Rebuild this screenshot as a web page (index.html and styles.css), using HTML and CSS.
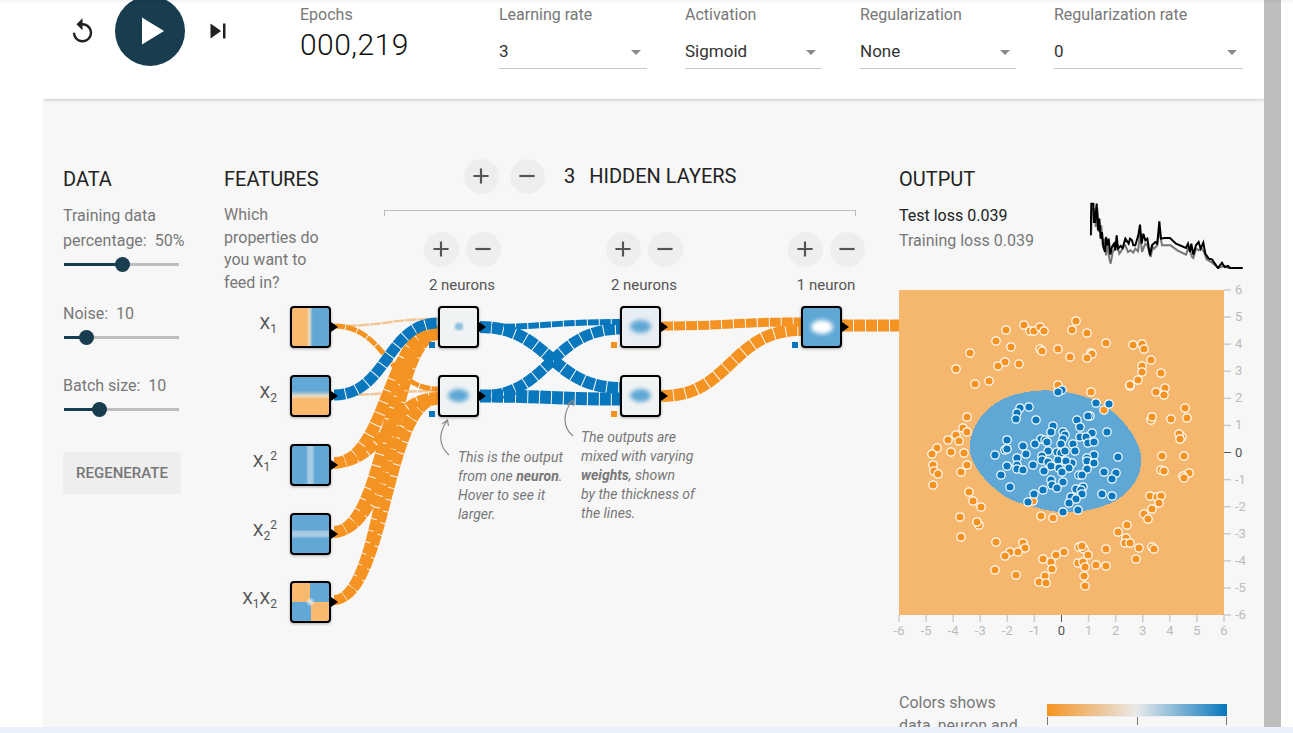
FILE: index.html
```html
<!DOCTYPE html>
<html lang="en">
  <head>
    <meta charset="UTF-8" />
    <meta name="viewport" content="width=device-width, initial-scale=1.0" />
    <title>Neural Network Playground</title>
    <link rel="stylesheet" href="styles.css">
  </head>
  <body>
    <svg class="defs" aria-hidden="true">
      <symbol id="icon-add" viewBox="0 0 24 24"><path d="M19 13h-6v6h-2v-6H5v-2h6V5h2v6h6v2z" /></symbol>
      <symbol id="icon-remove" viewBox="0 0 24 24"><path d="M19 13H5v-2h14v2z" /></symbol>
    </svg>

    <div class="page">
      <div class="main">
        <header class="header">
          <div class="player">
            <svg class="icon-reset" viewBox="0 0 24 24"><path d="M12 5V1L7 6l5 5V7c3.31 0 6 2.69 6 6s-2.69 6-6 6-6-2.69-6-6H4c0 4.42 3.58 8 8 8s8-3.58 8-8-3.58-8-8-8z" /></svg>
            <button class="play" type="button">
              <svg viewBox="0 0 70 70"><path d="M27 21.5 49 35 27 48.5z" /></svg>
            </button>
            <svg class="icon-step" viewBox="0 0 24 24"><path d="M6 18l8.5-6L6 6v12zM16 6v12h2V6h-2z" /></svg>
          </div>
          <div class="epochs">
            <div class="field-label">Epochs</div>
            <div class="epochs-value">000,219</div>
          </div>
          <div class="field field-rate">
            <div class="field-label">Learning rate</div>
            <div class="select">3</div>
          </div>
          <div class="field field-activation">
            <div class="field-label">Activation</div>
            <div class="select">Sigmoid</div>
          </div>
          <div class="field field-reg">
            <div class="field-label">Regularization</div>
            <div class="select">None</div>
          </div>
          <div class="field field-reg-rate">
            <div class="field-label">Regularization rate</div>
            <div class="select">0</div>
          </div>
        </header>

        <div class="workspace">
          <section class="data">
            <h4 class="title">DATA</h4>
            <div class="control control-first">
              <div class="control-label">Training data<br />percentage:&nbsp; 50%</div>
              <div class="slider">
                <div class="slider-fill" style="width: 58px"></div>
                <div class="slider-thumb"></div>
              </div>
            </div>
            <div class="control">
              <div class="control-label">Noise:&nbsp; 10</div>
              <div class="slider">
                <div class="slider-fill" style="width: 22px"></div>
                <div class="slider-thumb"></div>
              </div>
            </div>
            <div class="control">
              <div class="control-label">Batch size:&nbsp; 10</div>
              <div class="slider">
                <div class="slider-fill" style="width: 35px"></div>
                <div class="slider-thumb"></div>
              </div>
            </div>
            <button class="regenerate" type="button">REGENERATE</button>
          </section>

          <section class="network">
            <div class="network-head">
              <div class="features">
                <h4 class="title">FEATURES</h4>
                <p class="features-text">Which properties do you want to feed in?</p>
              </div>
              <div class="hidden-head">
                <div class="layer-count">
                  <button class="round" type="button"><svg><use href="#icon-add" /></svg></button>
                  <button class="round" type="button"><svg><use href="#icon-remove" /></svg></button>
                  <span class="count-num">3</span>
                  <span class="count-text">HIDDEN LAYERS</span>
                </div>
                <div class="bracket"></div>
                <div class="layer-controls">
                  <div class="layer">
                    <div class="layer-buttons">
                      <button class="round" type="button"><svg><use href="#icon-add" /></svg></button>
                      <button class="round" type="button"><svg><use href="#icon-remove" /></svg></button>
                    </div>
                    <div class="layer-label">2 neurons</div>
                  </div>
                  <div class="layer">
                    <div class="layer-buttons">
                      <button class="round" type="button"><svg><use href="#icon-add" /></svg></button>
                      <button class="round" type="button"><svg><use href="#icon-remove" /></svg></button>
                    </div>
                    <div class="layer-label">2 neurons</div>
                  </div>
                  <div class="layer">
                    <div class="layer-buttons">
                      <button class="round" type="button"><svg><use href="#icon-add" /></svg></button>
                      <button class="round" type="button"><svg><use href="#icon-remove" /></svg></button>
                    </div>
                    <div class="layer-label">1 neuron</div>
                  </div>
                </div>
              </div>
            </div>

            <div class="canvas">
              <svg class="links" viewBox="224 300 675 330">
                <path class="link thin" d="M334 326C387 326 387 319 438 319" />
                <path class="link thin" d="M334 395C387 395 387 391 438 391" />
                <path class="link orange w5" d="M334 326C387 326 387 389 438 389" />
                <path class="link orange w12" d="M334 463C387 463 387 331 438 331" />
                <path class="link orange w10" d="M334 463C387 463 387 397 438 397" />
                <path class="link orange w12" d="M334 532C387 532 387 333 438 333" />
                <path class="link orange w10" d="M334 532C387 532 387 399 438 399" />
                <path class="link orange w10" d="M334 600C387 600 387 335 438 335" />
                <path class="link orange w9" d="M334 600C387 600 387 400 438 400" />
                <path class="link blue w11" d="M334 395C387 395 387 323 438 323" />

                <path class="link blue w6" d="M480 327C550 327 550 322 621 322" />
                <path class="link blue w12" d="M480 327C550 327 550 388 621 388" />
                <path class="link blue w11" d="M480 396C550 396 550 329 621 329" />
                <path class="link blue w13" d="M480 396C550 396 550 399 621 399" />

                <path class="link orange w9" d="M662 326C731 326 731 322 801 322" />
                <path class="link orange w12" d="M662 396C731 396 731 330 801 330" />
                <path class="link orange w12" d="M842 325.500H899" />

                <path class="note-arrow" d="M449 455C440 447 437 435 447 421M442 424 447.500 420 448.500 426" />
                <path class="note-arrow" d="M573 436C563 428 562 414 572 401M567 405 573 400 573.500 406" />
              </svg>

              <div class="feat-label r0">X<sub>1</sub></div>
              <div class="feat-label r1">X<sub>2</sub></div>
              <div class="feat-label r2">X<sub>1</sub><sup>2</sup></div>
              <div class="feat-label r3">X<sub>2</sub><sup>2</sup></div>
              <div class="feat-label r4">X<sub>1</sub>X<sub>2</sub></div>

              <div class="node c0 r0 img-x1"></div>
              <div class="node c0 r1 img-x2"></div>
              <div class="node c0 r2 img-x1sq"></div>
              <div class="node c0 r3 img-x2sq"></div>
              <div class="node c0 r4 img-x1x2"></div>

              <div class="node c1 r0"><div class="blob blob-small"></div></div>
              <div class="node c1 r1"><div class="blob"></div></div>
              <div class="node c2 r0 img-pale"><div class="blob"></div></div>
              <div class="node c2 r1"><div class="blob"></div></div>
              <div class="node c3 r0 img-last"><div class="blob blob-white"></div></div>

              <div class="bias bias-blue b1 br0"></div>
              <div class="bias bias-blue b1 br1"></div>
              <div class="bias bias-orange b2 br0"></div>
              <div class="bias bias-orange b2 br1"></div>
              <div class="bias bias-blue b3 br0"></div>

              <div class="note note-one">This is the output from one <b>neuron</b>. Hover to see it larger.</div>
              <div class="note note-two">The outputs are mixed with varying <b>weights</b>, shown<br />by the thickness of the lines.</div>
            </div>
          </section>

          <section class="output">
            <h4 class="title">OUTPUT</h4>
            <div class="loss-row">
              <div class="loss-text">
                <div class="loss-test">Test loss 0.039</div>
                <div class="loss-train">Training loss 0.039</div>
              </div>
              <svg class="loss-chart" viewBox="600 40 460 201">
                <polyline class="loss-line-train" points="603,140 606,60 612,60 617,115 622,60 627,130 634,110 638,170 644,150 648,200 652,165 658,210 662,225 668,190 672,185 682,170 688,195 692,190 700,175 706,170 714,190 722,185 730,192 736,180 744,188 750,135 756,190 760,180 766,165 772,170 782,205 788,175 792,180 800,172 808,125 816,170 842,170 862,185 888,198 894,180 900,185 906,205 910,208 918,180 926,185 934,178 942,190 950,212 966,222 986,238 1000,232 1016,238 1058,238" />
                <polyline class="loss-line-test" points="602,140 604,45 610,45 612,100 615,100 620,45 624,125 628,90 632,150 636,130 640,175 645,190 648,145 652,170 656,150 661,198 666,175 672,165 676,185 680,140 684,180 692,172 698,178 706,150 716,165 720,150 726,155 730,170 736,170 745,140 750,108 755,165 760,135 766,155 772,150 776,175 780,200 786,170 796,160 802,165 808,98 813,150 824,148 840,148 858,165 888,178 894,165 900,190 904,165 910,198 918,170 926,160 932,180 940,162 946,195 956,210 966,212 984,238 996,222 1004,235 1014,232 1020,238 1058,238" />
              </svg>
            </div>
            <svg id="plot" class="plot" viewBox="899 291 360 360"></svg>
            <div class="legend">
              <div class="legend-text">Colors shows data, neuron and weight values.</div>
              <div class="legend-bar">
                <div class="legend-gradient"></div>
                <div class="legend-ticks"></div>
              </div>
            </div>
          </section>
        </div>
      </div>
      <div class="scrollbar"></div>
    </div>
    <div class="top-shade"></div>
    <div class="bottom-strip"></div>
    <script src="plot.js"></script>
  </body>
</html>
```
FILE: styles.css
```css
* {
  box-sizing: border-box;
}
html,
body {
  height: 733px;
  margin: 0;
  overflow: hidden;
  background: #fff;
}
body {
  font-family: Roboto, "Liberation Sans", Arial, sans-serif;
  color: #777;
  font-size: 16px;
}
button {
  font-family: inherit;
  border: none;
  padding: 0;
}
.defs {
  display: none;
}
.page {
  display: flex;
  height: 733px;
  padding-left: 43px;
}
.main {
  width: 1221px;
  height: 733px;
  background: #f7f7f7;
  overflow: hidden;
}
.scrollbar {
  width: 17px;
  height: 733px;
  background: #bebebe;
}
.top-shade {
  position: absolute;
  left: 0;
  top: 0;
  width: 100%;
  height: 4px;
  background: linear-gradient(rgba(0, 0, 0, 0.05), rgba(0, 0, 0, 0));
}
.bottom-strip {
  position: absolute;
  left: 0;
  bottom: 0;
  width: 100%;
  height: 6px;
  background: #e8f0fb;
}

/* header */
.header {
  display: flex;
  height: 99px;
  background: #fff;
  box-shadow: 0 1px 3px rgba(0, 0, 0, 0.2);
  position: relative;
}
.player {
  display: flex;
  align-items: center;
  height: 70px;
  margin-top: -4px;
  padding-left: 25px;
  width: 257px;
}
.icon-reset {
  width: 29px;
  height: 29px;
  fill: #212121;
}
.play {
  width: 70px;
  height: 70px;
  margin-left: 18px;
  border-radius: 50%;
  background: #183d4e;
}
.play svg {
  display: block;
  width: 70px;
  height: 70px;
  fill: #fff;
}
.icon-step {
  width: 30px;
  height: 30px;
  margin-left: 17.5px;
  fill: #212121;
}
.epochs {
  width: 199px;
  padding-top: 5.5px;
}
.field {
  padding-top: 5.5px;
  margin-right: 38px;
}
.field-rate {
  width: 148px;
}
.field-activation {
  width: 137px;
}
.field-reg {
  width: 156px;
}
.field-reg-rate {
  width: 189px;
  margin-right: 0;
}
.field-label {
  line-height: 17px;
  color: #777;
}
.epochs-value {
  margin-top: 4px;
  font-size: 30px;
  font-weight: 300;
  letter-spacing: 0.45px;
  line-height: 35px;
  color: #111;
}
.select {
  position: relative;
  height: 46px;
  padding-top: 18px;
  line-height: 20px;
  font-size: 17px;
  color: #333;
  border-bottom: 1px solid #c8c8c8;
}
.select::after {
  content: "";
  position: absolute;
  right: 6px;
  top: 27px;
  border-left: 5px solid transparent;
  border-right: 5px solid transparent;
  border-top: 5px solid #8a8a8a;
}

/* columns */
.workspace {
  display: flex;
  padding: 69px 0 0 20px;
}
.title {
  margin: 0;
  font-size: 20px;
  font-weight: 400;
  line-height: 23px;
  color: #222;
}
.data {
  width: 161px;
}
.control {
  margin-top: 28.5px;
  width: 118px;
}
.control-first {
  margin-top: 12px;
  width: 130px;
}
.control-label {
  line-height: 25px;
  white-space: nowrap;
}
.slider {
  display: flex;
  align-items: center;
  width: 115px;
  height: 15px;
  margin: 4px 0 0 1px;
  background: linear-gradient(#bdbdbd, #bdbdbd) center / 100% 3px no-repeat;
}
.slider-fill {
  height: 3px;
  background: #183d4e;
}
.slider-thumb {
  width: 15px;
  height: 15px;
  margin-left: -7.5px;
  border-radius: 50%;
  background: #183d4e;
}
.regenerate {
  display: block;
  width: 118px;
  height: 42px;
  margin-top: 35px;
  background: #eee;
  border-radius: 3px;
  color: #777;
  font-size: 15px;
  font-weight: 500;
}

/* network */
.network {
  width: 675px;
}
.network-head {
  display: flex;
}
.features {
  width: 160px;
}
.features-text {
  width: 105px;
  margin: 13px 0 0;
  line-height: 22.5px;
}
.hidden-head {
  width: 472px;
}
.layer-count {
  display: flex;
  align-items: center;
  gap: 11px;
  margin-top: -9.5px;
  padding-left: 79.500px;
  font-size: 20px;
  color: #222;
}
.count-num {
  margin-left: 8.5px;
}
.count-text {
  margin-left: 3px;
}
.round {
  display: block;
  width: 35px;
  height: 35px;
  border-radius: 50%;
  background: #eee;
}
.round svg {
  display: block;
  width: 26px;
  height: 26px;
  margin: 4.5px;
  fill: #555;
}
.bracket {
  height: 6px;
  margin-top: 16.5px;
  border: 1px solid #bdbdbd;
  border-bottom: none;
}
.layer-controls {
  display: grid;
  grid-template-columns: repeat(3, 182px);
  margin: 15.5px 0 0 -13px;
}
.layer-buttons {
  display: flex;
  justify-content: center;
  gap: 7px;
}
.layer-label {
  margin-top: 10px;
  line-height: 17px;
  font-size: 15px;
  text-align: center;
  color: #555;
}

/* diagram */
.canvas {
  position: relative;
  height: 330px;
  margin-top: 5.5px;
}
.links {
  position: absolute;
  left: 0;
  top: 0;
  width: 675px;
  height: 330px;
}
.link {
  fill: none;
  stroke-dasharray: 11 1;
}
.link.orange {
  stroke: #f59322;
}
.link.blue {
  stroke: #0877bd;
}
.link.thin {
  stroke: #f3c795;
  stroke-width: 2.5;
}
.w5 { stroke-width: 5; }
.w6 { stroke-width: 6; }
.w9 { stroke-width: 9; }
.w10 { stroke-width: 10; }
.w11 { stroke-width: 11; }
.w12 { stroke-width: 12; }
.w13 { stroke-width: 13; }
.note-arrow {
  fill: none;
  stroke: #888;
  stroke-width: 1.2;
}
.node {
  position: absolute;
  width: 41px;
  height: 42px;
  border: 2px solid #000;
  border-radius: 4px;
  background: #f0f3f4;
  box-shadow: 0 1px 3px rgba(0, 0, 0, 0.3);
  display: flex;
  align-items: center;
  justify-content: center;
}
.node::after {
  content: "";
  position: absolute;
  left: 39px;
  top: 14px;
  border-left: 7px solid #000;
  border-top: 5px solid transparent;
  border-bottom: 5px solid transparent;
}
.c0 { left: 66px; }
.c1 { left: 214px; }
.c2 { left: 396px; }
.c3 { left: 577px; }
.r0 { top: 6px; }
.r1 { top: 75px; }
.r2 { top: 144px; }
.r3 { top: 213px; }
.r4 { top: 281px; }
.img-x1 {
  background: linear-gradient(90deg, #fab96f 40%, #eadcc8 47%, #61a8d6 56%);
}
.img-x2 {
  background: linear-gradient(#61a8d6 36%, #eadcc8 50%, #fab96f 58%);
}
.img-x1sq {
  background: linear-gradient(90deg, #61a8d6 38%, #a6cbe3 44%, #a6cbe3 55%, #61a8d6 62%);
}
.img-x2sq {
  background: linear-gradient(#61a8d6 38%, #a6cbe3 44%, #a6cbe3 55%, #61a8d6 62%);
}
.img-x1x2 {
  background:
    radial-gradient(circle at 50% 50%, #eee 0, rgba(238, 238, 238, 0) 5px),
    conic-gradient(#61a8d6 25%, #fab96f 25% 50%, #61a8d6 50% 75%, #fab96f 75%);
}
.img-pale {
  background: #e8eef3;
}
.img-last {
  background: #5fa7d5;
}
.blob {
  width: 21px;
  height: 13px;
  border-radius: 50%;
  background: #5fa7d5;
  filter: blur(2px);
}
.blob-small {
  width: 8px;
  height: 7px;
  border-radius: 2px;
  background: #8cc0e0;
  filter: blur(1px);
}
.blob-white {
  width: 22px;
  height: 14px;
  background: #fff;
}
.feat-label {
  position: absolute;
  left: -7px;
  width: 60px;
  height: 42px;
  line-height: 35px;
  font-size: 17px;
  text-align: right;
  color: #555;
  white-space: nowrap;
}
.feat-label sub,
.feat-label sup {
  font-size: 12px;
  line-height: 0;
}
.bias {
  position: absolute;
  width: 6px;
  height: 6px;
}
.bias-blue {
  background: #0877bd;
}
.bias-orange {
  background: #f59322;
}
.b1 { left: 205px; }
.b2 { left: 387px; }
.b3 { left: 568px; }
.br0 { top: 42px; }
.br1 { top: 111px; }
.note {
  position: absolute;
  font-size: 14px;
  font-style: italic;
  line-height: 19px;
  color: #777;
}
.note-one {
  left: 234px;
  top: 148px;
  width: 112px;
}
.note-two {
  left: 357px;
  top: 128px;
  width: 116px;
}

/* output */
.output {
  width: 344px;
}
.loss-row {
  display: flex;
  justify-content: space-between;
  height: 67px;
  margin-top: 11px;
}
.loss-text {
  line-height: 25px;
  padding-top: 1px;
}
.loss-test {
  color: #222;
}
.loss-chart {
  width: 153.300px;
  height: 67px;
}
.loss-chart polyline {
  fill: none;
  stroke-width: 6;
}
.loss-line-train {
  stroke: #777;
}
.loss-line-test {
  stroke: #000;
}
.plot {
  display: block;
  width: 360px;
  height: 360px;
  margin-top: 21px;
  overflow: visible;
}
.plot text {
  font-size: 13px;
  fill: #bbb;
}
.plot text.zero {
  fill: #555;
}
.legend {
  display: flex;
  margin-top: 40.5px;
}
.legend-text {
  width: 148px;
  padding-right: 20px;
  line-height: 23px;
}
.legend-bar {
  width: 180px;
  margin-top: 13.5px;
}
.legend-gradient {
  height: 13px;
  background: linear-gradient(90deg, #f59322, #e8eaeb 50%, #0877bd);
  border-bottom: 1px solid #eee;
}
.legend-ticks {
  height: 8px;
  border-left: 1px solid #777;
  border-right: 1px solid #777;
  background: linear-gradient(#777, #777) center / 1px 100% no-repeat;
}
```
FILE: plot.js
```js
// test/train points in page coordinates, same as the svg viewBox
const orangeDots = [
  [1076,322],[1024,326],[1006,331],[1030,332],[1034,332],[1040,328],[1044,332],[1072,331],[1087,334],[1106,344],
  [1133,346],[1142,345],[1144,350],[996,342],[1011,348],[1040,350],[1042,352],[1058,350],[970,354],[1070,358],
  [1091,354],[1092,355],[1087,359],[1151,361],[1142,367],[1142,373],[1161,374],[1005,363],[998,367],[1019,365],
  [956,370],[989,382],[975,385],[1138,381],[1130,387],[1130,386],[1165,389],[1156,393],[1164,396],[1058,386],
  [1091,393],[1185,409],[1187,419],[1104,411],[967,418],[1151,421],[1152,418],[1171,420],[963,429],[956,436],
  [948,441],[959,442],[967,433],[937,449],[1182,438],[1179,435],[1180,440],[932,455],[951,453],[964,454],
  [1162,457],[1184,457],[933,466],[967,466],[934,472],[938,475],[961,473],[1161,471],[1164,472],[1189,474],
  [1183,477],[1184,479],[933,486],[969,493],[973,502],[981,508],[1150,497],[1157,498],[1161,497],[1159,504],
  [1152,510],[1144,515],[1148,520],[960,518],[979,526],[977,523],[1041,517],[1053,519],[1127,526],[1118,533],
  [961,538],[1126,539],[1125,544],[1130,544],[996,543],[1023,544],[1025,549],[1010,553],[1005,557],[1018,553],
  [1079,548],[1084,550],[1082,547],[1106,550],[1139,549],[1152,548],[1154,550],[1064,553],[1056,556],[1088,556],
  [1043,560],[1051,563],[1078,564],[1083,563],[1136,560],[1096,566],[1106,567],[1085,568],[1052,570],[995,571],
  [1016,576],[1045,577],[1084,577],[1039,583],[1046,584],[1085,587],[1033,502]
];
const blueDots = [
  [1062,391],[1058,393],[1096,404],[1109,405],[1020,409],[1029,408],[1017,414],[1016,420],[1036,421],[1090,417],
  [1088,417],[1077,421],[1053,427],[1080,428],[1051,433],[1063,433],[1092,434],[1107,433],[1065,436],[1063,440],
  [1080,438],[1086,438],[1041,440],[1045,441],[1047,443],[1007,441],[1035,445],[1061,445],[1073,445],[1088,444],
  [1094,443],[1023,447],[1005,451],[1007,450],[1048,452],[1057,453],[1061,454],[1075,452],[1065,452],[1026,455],
  [995,456],[1042,457],[1094,456],[1118,458],[1017,459],[1058,461],[1087,459],[1042,461],[1048,463],[1072,464],
  [1066,462],[1087,462],[1094,464],[1007,467],[1033,466],[1017,466],[1017,470],[1023,471],[1051,467],[1059,469],
  [1069,469],[1087,470],[1044,472],[1062,473],[1104,473],[1116,474],[1001,476],[1079,476],[1082,476],[1112,480],
  [1051,481],[1063,483],[1052,486],[1057,489],[1043,491],[1010,488],[1076,490],[1083,488],[1081,491],[1082,495],
  [1034,495],[1071,498],[1076,500],[1102,495],[1112,497],[1069,504],[1028,503],[1078,511],[1063,513]
];
// outline of the blue decision region
const region = [
  [1027,392],[1055,391],[1077,395],[1095,401],[1110,410],[1122,421],[1132,434],[1139,447],[1142,460],[1139,477],
  [1131,489],[1120,500],[1097,510],[1063,515],[1030,507],[1007,500],[987,483],[975,468],[969,452],[971,436],
  [980,417],[1000,400]
];

const plot = document.getElementById("plot");
const ns = "http://www.w3.org/2000/svg";

function add(name, attrs, text) {
  const el = document.createElementNS(ns, name);
  for (const key in attrs) el.setAttribute(key, attrs[key]);
  if (text !== undefined) el.textContent = text;
  plot.appendChild(el);
  return el;
}

add("rect", { x: 899, y: 291, width: 325, height: 325, fill: "#f5b66e" });

let d = "";
region.forEach((p, i) => {
  const next = region[(i + 1) % region.length];
  const mx = (p[0] + next[0]) / 2;
  const my = (p[1] + next[1]) / 2;
  d += i === 0 ? `M${mx} ${my}` : `Q${p[0]} ${p[1]} ${mx} ${my}`;
});
const first = region[0];
const second = region[1];
d += `Q${first[0]} ${first[1]} ${(first[0] + second[0]) / 2} ${(first[1] + second[1]) / 2}z`;
add("path", { d: d, fill: "#5fa7d5", "shape-rendering": "crispEdges" });

orangeDots.forEach((p) => {
  add("circle", { cx: p[0], cy: p[1], r: 4.2, fill: "#f59322", stroke: "#fff", "stroke-width": 1.2 });
});
blueDots.forEach((p) => {
  add("circle", { cx: p[0], cy: p[1], r: 4.2, fill: "#0877bd", stroke: "#fff", "stroke-width": 1.2 });
});

for (let v = -6; v <= 6; v++) {
  const x = 899 + (v + 6) * (325 / 12);
  const y = 616 - (v + 6) * (325 / 12);
  const color = v === 0 ? "#555" : "#ccc";
  const cls = v === 0 ? "zero" : "";
  add("line", { x1: x, y1: 616, x2: x, y2: 623, stroke: color, "stroke-width": v === 0 ? 1 : 1.5 });
  add("line", { x1: 1224, y1: y, x2: 1231, y2: y, stroke: color, "stroke-width": v === 0 ? 1 : 1.5 });
  add("text", { x: x, y: 636, "text-anchor": "middle", class: cls }, v);
  add("text", { x: 1235, y: y + 4, class: cls }, v);
}
```
